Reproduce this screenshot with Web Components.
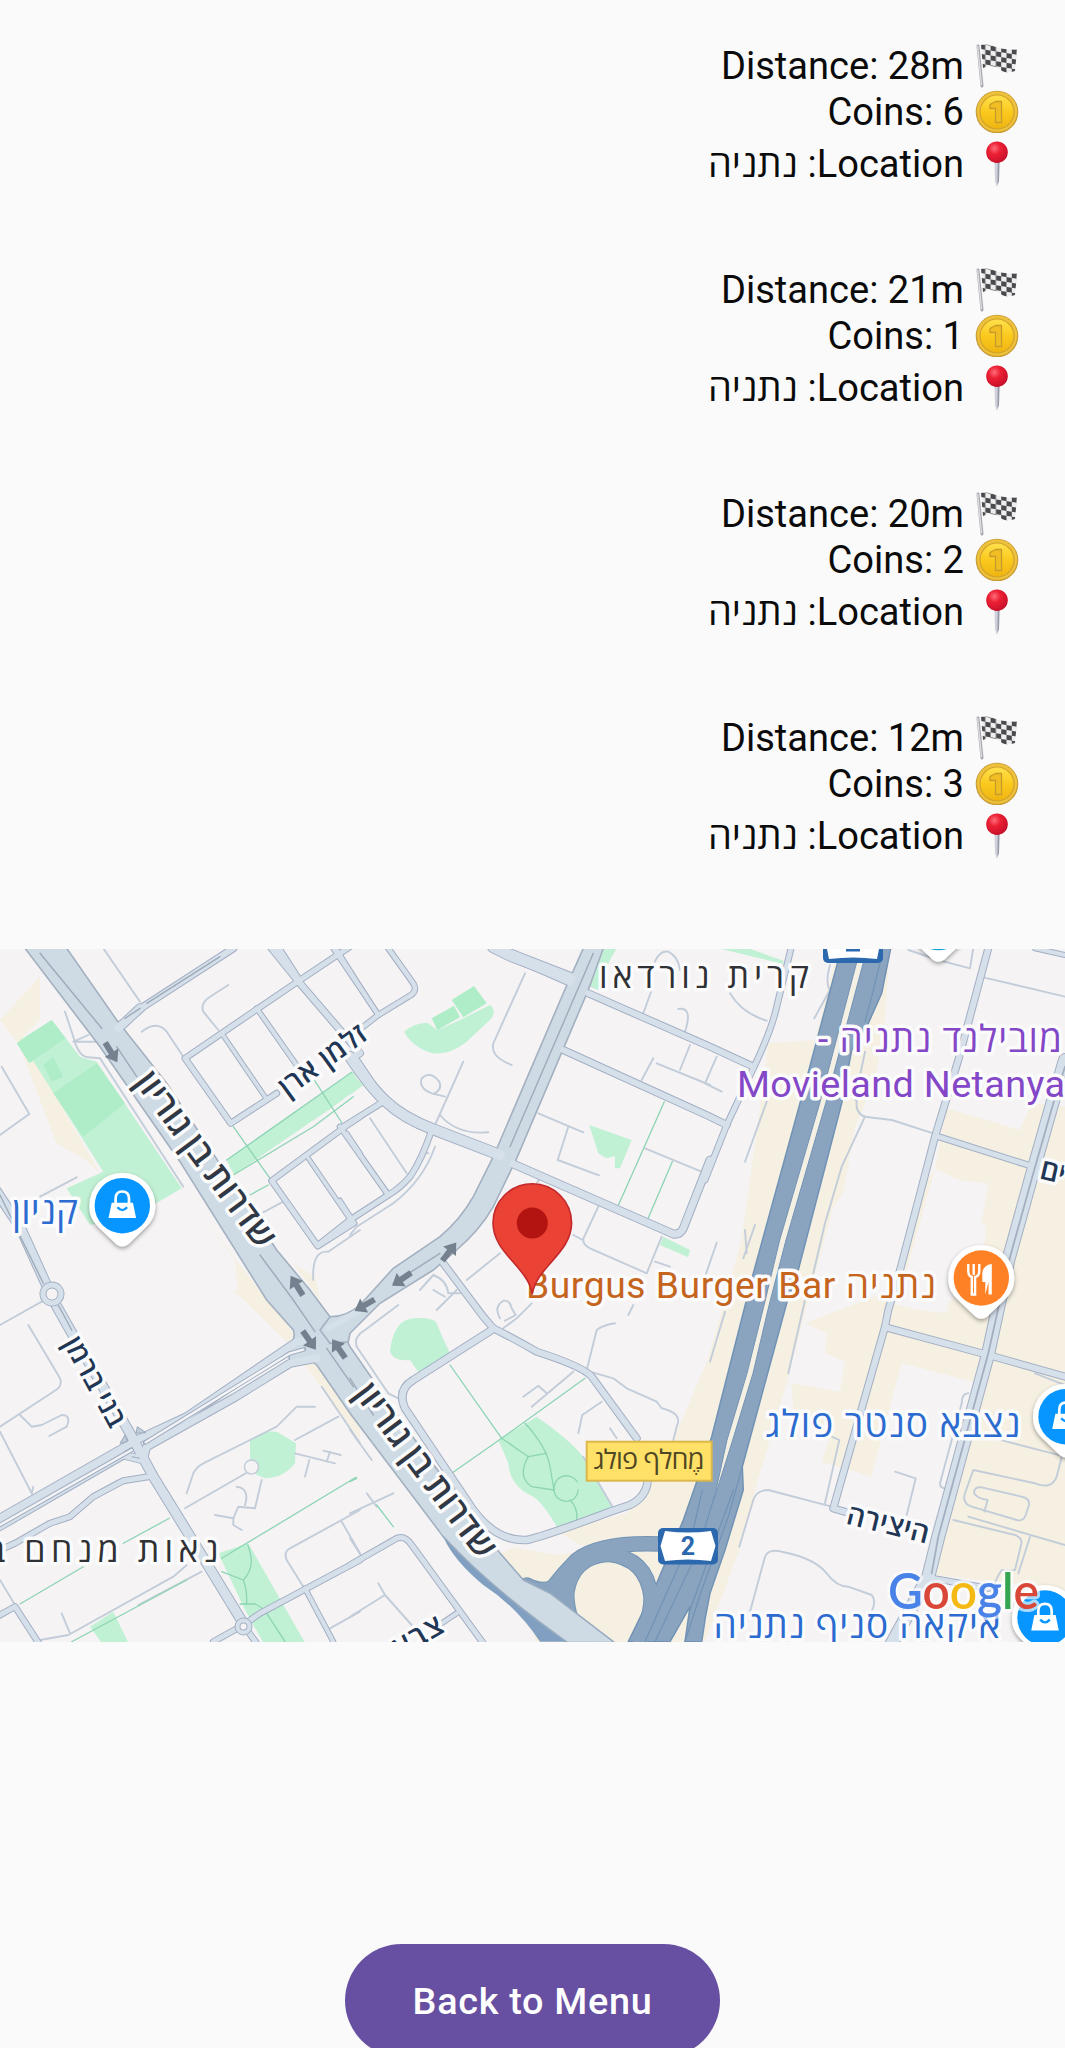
<!DOCTYPE html>
<html lang="he">
<head>
<meta charset="utf-8">
<title>Runs</title>
<style>
html,body{margin:0;height:2048px;overflow:hidden;background:#fafafa}
</style>
</head>
<body>
<score-screen></score-screen>
<script>
class EmojiIcon extends HTMLElement{
  connectedCallback(){
    const art={
      flag:`<svg viewBox="0 0 44 46" width="44" height="46"><defs><clipPath id="f"><path d="M6 2C16 0 22 6 30 6Q37 7 42 6L40 28Q30 32 23 25Q16 21 8 25Z"/></clipPath><pattern id="c" width="10.6" height="9.8" patternUnits="userSpaceOnUse" patternTransform="translate(5 1) skewY(9)"><path fill="#eee" d="M0 0h10.6v9.8H0z"/><path fill="#4a494d" d="M0 0h5.3v4.9H0zM5.3 4.9h5.3v4.9H5.3z"/></pattern></defs><g clip-path="url(#f)"><path d="M0 0h44v34H0z" fill="url(#c)"/></g><path d="M3 3L7 43" stroke="#a8a7ad" stroke-width="3" stroke-linecap="round"/><path d="M2.6 3L6.5 42" stroke="#dedde2" stroke-width="1.4"/></svg>`,
      coin:`<svg viewBox="0 0 44 44" width="44" height="44"><defs><linearGradient id="g" x2="0" y2="1"><stop stop-color="#ffe24d"/><stop offset=".5" stop-color="#fbc91d"/><stop offset="1" stop-color="#eeb412"/></linearGradient></defs><circle cx="22" cy="23" r="21.3" fill="#c99b34"/><circle cx="22" cy="22.6" r="20.2" fill="#edc13b"/><circle cx="22" cy="23" r="17" fill="url(#g)" stroke="#d3a428" stroke-width="1.2"/><path d="M15 15.500L20.5 12.500H26.5V33.500H20.5V19.500H15Z" fill="#f0be22" stroke="#c79a2c" stroke-width="1.3" stroke-linejoin="round"/></svg>`,
      pin:`<svg viewBox="0 0 44 46" width="44" height="46"><defs><radialGradient id="r" cx=".38" cy=".32" r=".7"><stop stop-color="#ff6b78"/><stop offset=".4" stop-color="#ec2035"/><stop offset="1" stop-color="#c5102a"/></radialGradient></defs><path d="M19.5 20H24.5L24 40L22 46L20 40Z" fill="#cfd0da"/><path d="M22.8 20H24.5L24 40L22.5 44Z" fill="#9698a8"/><circle cx="22" cy="11.2" r="10.8" fill="url(#r)"/></svg>`
    };
    this.attachShadow({mode:'open'}).innerHTML=`<style>:host{display:flex;width:44px;justify-content:center}svg{display:block}</style>${art[this.getAttribute('name')]}`;
  }
}
customElements.define('emoji-icon',EmojiIcon);

class ScoreItem extends HTMLElement{
  connectedCallback(){
    this.attachShadow({mode:'open'}).innerHTML=`<style>
    :host{display:flex;flex-direction:column;height:144px;direction:rtl}
    .row{display:flex;height:46px;align-items:flex-start;gap:11px}
    .row:nth-of-type(3){margin-top:6px}
    .t{line-height:46px;white-space:pre;font-size:38.1px}
    </style>
    <div class="row"><emoji-icon name="flag"></emoji-icon><span class="t">Distance: ${this.getAttribute('distance')}</span></div>
    <div class="row"><emoji-icon name="coin"></emoji-icon><span class="t">Coins: ${this.getAttribute('coins')}</span></div>
    <div class="row"><emoji-icon name="pin"></emoji-icon><span class="t">Location: <slot></slot></span></div>`;
  }
}
customElements.define('score-item',ScoreItem);

/* Shapes are written in thirds of a pixel inside six tiles; "@A".."@F" switches tile. */
const TILES={A:[0,940],B:[350,940],C:[705,940],D:[0,1290],E:[350,1290],F:[705,1290]};
function geo(s){
  let t=TILES.A;
  return s.split('@').filter(Boolean).map(part=>{
    t=TILES[part[0]];
    return part.slice(1).replace(/(-?[\d.]+)[ ,]+(-?[\d.]+)/g,(m,x,y)=>(t[0]+x/3).toFixed(1)+' '+(t[1]+y/3).toFixed(1));
  }).join(' ');
}
const BEIGE=[
 '@A M120 110 L0 240 L55 310 L170 610 L265 665 L300 700 L150 440 L60 300 L120 240Z',
 '@A M545 745 L705 960 L715 1060 L800 1080 Z','@A M880 970 L945 1010 L960 1080 Z',
 '@D M700 0 L790 0 L880 130 L870 165 Z','@D M915 225 L950 220 L1080 395 L1080 450 Z',
 '@C M390 60 L555 25 L540 240 L510 420 L450 560 L415 760 L385 800 L330 1000 @F L245 280 L150 600 L110 760 L0 1055 @E L560 1055 L450 790 L520 760 L640 720 L830 670 L900 590 L970 450 L1075 205 @C L110 900 L165 500 L190 310 L330 300Z',
 '@C M725 505 L945 570 L980 490 L1080 500 L1080 1080 @F L1080 900 L690 855 L840 190 L820 280 L590 220 L500 560 L350 515 L375 440 L265 360 L260 280 L405 305 L420 215 L360 190 L365 130 L300 100 @C L560 1050 L575 1000 L640 770 L690 685Z'
];
const WHITE=['@C M690 685 L760 720 L850 730 L830 850 L845 860 L835 930 L740 1080 L580 1080Z','@F M550 0 L740 0 L725 70 L640 60 L560 40Z','@F M590 220 L820 280 L700 700 L500 555Z','@E M450 765 L630 730 L720 780 L620 795Z'];
const GREEN=[
 '@A M60 300 L155 240 L240 350 L290 365 L545 745 L400 830 L270 855 L200 745 L310 695Z',
 '@A M680 660 L1060 395 L1080 440 L1000 500 L700 705Z','@B M0 395 L40 435 L0 465Z',
 '@B M162 275 Q190 250 232 248 L262 270 L330 240 L420 195 Q440 210 425 235 L350 305 Q300 345 250 340 Q190 325 162 275Z',
 '@B M718 555 L845 600 L810 685 L795 685 L795 648 L768 655 L745 640Z','@B M940 890 L1020 930 L1015 952 L930 915Z',
 '@B M762 25 L800 25 L780 60 L745 150 L720 140Z','@C M40 25 L130 25 L235 62 L235 72Z',
 '@D M750 450 Q790 420 830 425 L888 460 L885 520 Q850 565 795 565 L770 555 L750 510Z',
 '@D M655 790 L745 760 L915 1058 L790 1058 L735 960Z','@D M270 1010 L340 965 L385 1058 L305 1058Z',
 '@E M120 185 Q130 90 190 85 Q240 80 258 95 Q275 140 300 190 L215 260 L180 210 Q130 215 120 185Z',
 '@E M445 450 L560 380 Q660 450 700 500 L790 655 L620 710 Q580 640 550 620 Q480 590 475 520Z'
];
const GREEN2=['@A M50 310 L155 240 L197 295 L88 370Z','@A M130 375 L160 350 L190 410 L155 425Z','@A M160 460 L290 370 L375 490 L250 590Z','@B M305 180 L372 138 L410 190 L340 232Z','@B M245 235 L312 197 L330 232 L262 270Z'];
const GLINES=['@A M930 400 L1030 555','@A M700 560 L810 715','@A M680 660 L1055 397 M700 705 L940 560 L1060 470','@A M750 765 L805 735','@B M943 485 L803 800','@B M967 665 L893 838','@D M60 942 L250 830','@D M370 760 L508 685','@D M215 1055 L560 870','@D M665 805 L1068 562','@E M0 575 L20 565','@E M300 225 L455 445 L705 265','@E M305 550 L455 445','@E M80 645 L130 710','@E M240 510 L290 580','@E M455 445 L535 500 L590 490','@E M525 400 Q590 470 600 530 L612 600 L545 590 Q500 560 535 500','@E M660 630 Q685 655 680 690','@E M685 600 Q680 632 650 634 Q612 630 612 596 Q615 560 648 557 Q668 558 682 575','@D M743 765 Q770 830 730 870 L665 845','@D M730 870 Q742 900 740 942','@D M720 942 L765 942 Q785 950 800 970 L855 1055'];
const THIN=['@A M310 25 L420 185','@A M425 275 Q470 240 500 275 L550 350','@A M655 270 L610 215 Q600 190 630 170 L685 135','@A M195 215 L220 290 Q235 350 265 352 L300 355 L550 740','@A M265 285 L220 305 L300 305','@A M5 380 L88 522 L0 585','@A M120 770 L230 712','@A M775 825 L850 785','@A M940 1020 Q935 930 985 935 L1080 870',
'@B M525 100 L430 310 Q420 350 485 375','@B M340 365 L255 555','@B M285 470 L245 460 Q205 445 215 415 Q240 390 268 425 Q278 450 250 462','@B M270 525 Q320 585 415 577','@B M565 520 L700 577','@B M655 560 L623 660 L747 706','@B M875 420 L910 355','@B M920 370 L1080 435','@B M1020 315 L990 390','@B M880 220 L905 150','@B M905 95 Q920 30 955 35 Q985 50 990 90','@B M985 207 Q1030 200 1005 275','@B M885 625 L1060 697','@B M255 620 Q220 720 130 790 L20 860 L0 885','@B M235 640 L222 635','@B M60 535 L170 700','@B M560 730 L570 715','@B M450 940 L350 1020','@B M670 885 L698 900 L745 800','@B M700 900 Q700 915 720 925 L890 1000 L935 890','@B M915 965 L960 980','@B M210 1050 L250 1005 Q290 1020 295 1060 L330 1060',
'@C M75 160 Q110 220 185 242','@C M375 75 Q360 130 375 150 L328 235','@C M185 485 L120 665','@C M35 350 L0 430 L50 455','@C M455 480 Q450 520 480 530 L560 540 L685 580','@C M480 530 L410 680 L360 850 L325 1000','@C M480 335 L450 480','@C M610 30 L700 60 L795 85 L805 25','@C M835 112 L1080 170','@C M35 908 L0 1010','@C M115 955 L150 855 M125 940 L120 870',
'@D M85 105 L180 265 Q190 290 160 305 L0 410','@D M0 105 L125 35','@D M0 425 L95 610','@D M60 375 L95 410 L125 405 L185 375 Q215 375 200 410 L148 438','@D M560 610 L580 550 Q590 530 610 520 L750 450 L830 410 L890 350 L945 350','@D M885 450 L1015 380','@D M555 655 L740 548','@D M785 570 L765 655 L715 650 L700 685 L645 675','@D M710 590 Q750 595 735 645','@D M700 685 L700 705 L725 720','@D M885 490 L1005 520 M928 510 L915 560 M970 482 L1022 495 M990 485 L980 515','@D M965 290 L1080 460','@D M910 890 L860 810 Q850 785 870 775 L1080 660','@D M1025 695 L1080 790','@D M990 1015 L1080 965','@D M185 970 L210 1030','@D M120 1050 L205 1035 L520 860 L560 825','@D M415 945 L605 845','@D M0 870 L45 945','@D M100 590 L95 610',
'@E M145 325 L115 310 L20 170 Q10 140 45 120 L145 45','@E M0 420 L65 510','@E M0 670 L130 610','@E M0 745 L35 800','@E M0 980 L105 915 L85 880 M105 915 L185 1005','@E M50 610 L80 650','@E M460 115 L500 85 L545 40','@E M450 85 Q430 50 460 32 Q480 30 485 55 L497 75 L465 92','@E M260 60 L320 0 M285 20 L250 0','@E M710 240 L740 120 Q760 105 795 100','@E M835 75 L850 45','@E M720 245 L790 265 L830 295 L920 335 L935 355 Q1000 370 980 410 L970 450','@E M670 245 L545 350 M520 320 L565 287 L590 310','@E M685 430 L697 375 L755 335','@E M780 415 L800 445','@E M700 500 L790 655',
'@F M60 65 L15 215','@F M300 30 L250 250','@F M103 770 L145 630 Q155 600 190 600 L380 650','@F M380 440 L403 450 L360 640','@F M570 545 L632 565 L605 675','@F M135 965 L180 800 Q190 775 230 785 Q330 805 365 850 Q395 890 430 890 L500 915 Q515 930 500 965','@F M850 440 L1080 500 M1070 500 L1055 560 Q1040 600 990 580 L805 540 L780 610 Q770 640 800 650 L935 690 Q955 695 962 675 L972 645 Q975 625 950 620 L830 592 Q805 590 808 610 Q815 625 848 630 L838 665','@F M790 680 L1080 765','@F M745 690 L930 735 Q955 745 948 765 L930 840 L890 840 Q870 870 865 895','@F M975 740 L940 850','@F M790 310 Q770 310 770 340 L705 580 Q705 595 720 595','@F M990 250 L1080 285'];
/* [width, path] */
const STREETS=[
 [8,'@A M365 255 L430 200 L700 25'],[10,'@A M355 265 L420 205'],[8,'@A M815 25 L900 130 L1080 340 @B L12 350 L100 480'],
 [7,'@A M1080 0 L885 130 L555 355 L692 550 L830 460'],[5.5,'@A M665 280 L795 470'],[6,'@A M770 205 L900 390'],[6,'@A M1010 30 L1080 140 @B L85 225'],
 [6.5,'@B M115 25 L190 130 Q205 155 175 170 L85 225 L40 260'],[6,'@B M-50 25 L85 225'],[8,'@A M835 25 L890 110'],
 [7,'@A M1080 530 L1035 560 L815 722 L953 918 L1060 850'],[5.5,'@A M925 655 L1055 845'],[5.5,'@A M1040 580 L1080 640'],
 [7,'@B M-20 560 L100 485'],[6.5,'@B M-30 560 L115 765'],[7,'@B M245 570 Q215 660 180 710 Q150 745 115 765 L0 840 L-95 915'],[5,'@B M-30 780 L15 850'],
 [12,'@B M0 350 Q60 440 105 482 Q160 535 250 568 L450 645'],[13,'@B M430 20 L480 45 L660 115'],[7,'@B M480 50 L660 130'],
 [8,'@B M715 160 L1080 320 @C L145 380'],[8,'@B M640 330 L1080 530 @C L65 555'],[9,'@B M490 672 L970 882 Q990 885 1000 865 L1080 660'],
 [7,'@C M258 25 L215 200 Q200 270 145 385 L65 555 L0 720'],[8,'@C M850 25 L760 360 L690 590 L580 1010 @F L550 60 L540 110 L385 655 L470 680'],
 [7,'@C M700 590 L985 680'],[6,'@C M990 25 L1080 45'],[8,'@F M545 113 L850 195 L1080 260'],
 [14,'@C M1080 360 L1045 480 L985 690 L910 960 @F L850 190 L700 740 L670 860 L550 1080'],[7,'@F M680 865 L850 895'],
 [8,'@B M280 970 L400 1130 @E L430 115'],[8,'@E M430 115 Q500 150 560 185 Q700 230 725 260 L860 445'],
 [8.5,'@E M425 120 L190 270 Q140 300 165 355 L370 660 Q440 755 530 750 Q580 740 780 665 L840 645 Q890 620 893 570'],
 [7,'@E M0 825 L140 745 Q165 735 185 765 L400 1060'],[6,'@E M275 1000 L320 970'],
 [11,'@A M-20 740 L60 860 L135 1025 @D L165 40 L230 155 L390 430 L460 560 L620 820 L730 1000'],
 [9,'@D M-10 690 L340 490 L420 445 L560 380 L890 155 L940 150'],[9,'@D M-10 715 L370 495 L430 510 L440 470 L700 325 L870 220 L950 205'],
 [7,'@D M0 780 L45 760 L150 700 L210 680 L280 620 L370 572 L445 560'],
 [7,'@D M-10 980 L45 950 L115 1058'],[7,'@D M640 1055 L730 1005 L780 970 L1080 810'],[6,'@D M915 895 L1000 1055'],[7,'@D M730 1005 L770 1060'],
 [8,'@D M985 115 L1080 60']
];
const AVENUES=['@A M75 25 L300 320 L540 665 L800 1080 @D L880 120 Q890 150 860 170 L870 215 Q930 205 950 225 @E L0 370 L280 740 Q430 900 650 1055 L790 1055 L600 910 L520 870 L450 790 L180 430 L0 170 @D L1040 150 L990 80 L930 0 @A L830 930 L500 430 L350 240 L200 25 Z',
'@D M990 80 Q1040 80 1080 45 @B L130 985 L270 890 Q330 840 370 770 L430 650 L640 160 L700 25 L760 25 L715 150 L500 655 L430 800 Q390 870 320 930 L250 990 L90 1090 @E L0 130 @D L1045 155 L990 160 L960 120 Z'];
const HIGHWAYS=['@C M400 60 L285 490 L145 1000 @F L20 440 L-30 590 L-65 690 L-145 880 L-230 1055 L-105 1055 L-45 950 L-60 1055 L-10 1055 Q0 980 15 910 L60 780 L115 600 L112 530 L245 40 @C L280 990 L410 490 L440 330 L490 250 L530 160 L557 25 L410 25Z'];
const MEDIAN=['@C M457 60 L477 60 L362 490 L243 900 @F L191 50 L144 250 L83 450 L28 625 L66 450 L126 250 L176 50 @C L224 900 L344 490Z'];
const HWLINES=['@C M532 40 L500 170 L480 245','@F M112 530 L70 680 L-10 900 L-60 1055','@F M85 600 L20 780 L-45 960','@F M28 620 L10 680 L-20 780 L-150 1055','@F M-8 600 L-40 740 L-180 1055'];
const RAMP=['@E M930 762 Q750 755 680 810 Q640 850 610 890 Q580 910 530 885','@E M702 1065 Q650 990 650 910 Q665 800 775 793 Q890 805 903 920 Q905 970 870 1055','@E M620 890 L660 1040'];
const paths=(a,attr)=>a.map(d=>`<path d="${geo(d)}" ${attr}/>`).join('');

const bag='<path d="M-10.6 -3H10.6L13.8 12.4H-13.8Z" fill="#fff"/><path d="M-6.7 -2V-7Q-6.7 -14.2 0 -14.2Q6.7 -14.2 6.7 -7V-2" fill="none" stroke="#fff" stroke-width="2.7"/><path d="M-4.8 1.6Q0 7.2 4.8 1.6" fill="none" stroke="#0795ff" stroke-width="2.4"/>';
const fork='<path d="M-13 -14V-7Q-13 -2 -9.5 -1V16.5H-6.2V-1Q-2 -2 -2 -7V-14M-7.6 -14V-3" fill="none" stroke="#fff" stroke-width="2.4"/><path d="M4 16.5V4H1V-5Q2 -13 10.5 -14V16.5H7.2V4Z" fill="#fff"/>';
const poi=(x,y,c,i)=>`<g transform="translate(${x} ${y})"><path d="M-33 0A33 33 0 1 1 33 0C33 13 27 18 20 25L6 38.500Q0 43 -6 38.500L-20 25C-27 18 -33 13 -33 0Z" fill="#fff" filter="url(#sh)"/><circle r="27.7" fill="${c}"/>${i}</g>`;
const arrow=(x,y,a)=>`<path transform="translate(${x} ${y}) rotate(${a})" d="M-11 -3H1V-8L12 0L1 8V3H-11Z" fill="#75818f"/>`;
const label=(x,y,size,fill,w,s,extra='')=>`<text x="${x}" y="${y}" font-size="${size}" fill="${fill}" textLength="${w}" ${extra}>${s}</text>`;
const road=(x,y,a,size,w,s,fill='#1f3654')=>`<text transform="translate(${x} ${y}) rotate(${a})" y="${size*.31}" font-size="${size}" fill="${fill}" textLength="${w}" font-weight="600">${s}</text>`;

class CityMap extends HTMLElement{
  connectedCallback(){
    const line='fill="none" stroke-linejoin="round" stroke-linecap="round"';
    this.attachShadow({mode:'open'}).innerHTML=`<style>
    :host{display:block;height:693px}svg{display:block}
    .lb text{font-family:Roboto,"Open Sans","Liberation Sans",sans-serif;text-anchor:middle;paint-order:stroke;stroke:#fbfbfc;stroke-width:7px;stroke-linejoin:round;white-space:pre}
    </style>
    <svg width="1065" height="693" viewBox="0 949 1065 693">
    <defs><filter id="sh" x="-30%" y="-30%" width="160%" height="170%"><feDropShadow dx="0" dy="2" stdDeviation="2.2" flood-color="#000" flood-opacity=".38"/></filter></defs>
    <path d="M0 949H1065V1642H0Z" fill="#f5f3f4"/>
    ${paths(BEIGE,'fill="#f5f0e1"')}${paths(WHITE,'fill="#f5f3f4"')}${paths(GREEN,'fill="#c1f1d5"')}${paths(GREEN2,'fill="#afedc8"')}
    ${paths(THIN,line+' stroke="#c3cdd9" stroke-width="1.9"')}${paths(GLINES,line+' stroke="#8cd4b4" stroke-width="1.3"')}
    ${STREETS.map(([w,d])=>paths([d],`${line} stroke="#a3afc3" stroke-width="${w}"`)).join('')}
    ${paths(AVENUES,'fill="#cedae4" stroke="#a3b0c0" stroke-width="1.6"')}
    ${STREETS.map(([w,d])=>paths([d],`${line} stroke="#d6e0ea" stroke-width="${w-2}"`)).join('')}
    ${paths(['@C M1080 380 L1045 490 L985 700 L910 970 @F L850 190 L700 740 L680 850'],line+' stroke="#a3afc0" stroke-width="1.8"')}
    ${paths(['@A M120 40 L305 265','@A M350 320 L410 410','@A M780 945 L880 1080 @D L945 125','@D M980 175 L1060 290','@E M0 265 L70 375','@B M730 40 L480 620','@B M270 940 L130 1030','@D M175 45 L215 120','@A M0 765 L130 1030','@A M375 235 L420 205','@A M440 190 L660 50'],line+' stroke="#9eabb9" stroke-width="1.4"')}
    ${paths(['@D M435 458 L870 190 L912 178','@D M0 705 L395 480'],line+' stroke="#9fadc0" stroke-width="4.4"')}
    ${paths(['@D M437 457 L870 190 L910 179','@D M0 705 L395 480'],line+' stroke="#f4f3f5" stroke-width="2.4"')}
    ${paths(['@D M360 460 L375 435 L382 455Z','@D M408 430 L412 410 L438 428Z','@D M395 500 L420 505'],'fill="#c0ccda" stroke="#9ba9bd" stroke-width="1"')}
    <circle cx="52" cy="1294" r="9" fill="#f5f3f4" stroke="#a3b0c4" stroke-width="7"/><circle cx="52" cy="1294" r="9" fill="none" stroke="#d6e0ea" stroke-width="5"/>
    <circle cx="243.5" cy="1626.500" r="6" fill="#f5f3f4" stroke="#a3b0c4" stroke-width="6"/><circle cx="243.500" cy="1626.500" r="6" fill="none" stroke="#d6e0ea" stroke-width="4"/>
    <circle cx="251.500" cy="1467" r="7" fill="#f5f3f4" stroke="#c3cdd9" stroke-width="1.5"/>
    ${paths(RAMP,line+' stroke="#7393b5" stroke-width="15.5"')}
    ${paths(HIGHWAYS,'fill="#8aa4c0" stroke="#7192b5" stroke-width="1.5"')}
    ${paths(RAMP,line+' stroke="#8aa4c0" stroke-width="13.5"')}
    ${paths(MEDIAN,'fill="#f4f0e4" stroke="#7393b5" stroke-width="1"')}
    ${paths(HWLINES,line+' stroke="#7192b5" stroke-width="1.2"')}
    ${paths(['@E M280 740 Q420 890 650 1055 L570 1055 Q500 950 400 885 Q310 810 280 740Z'],'fill="#81a0c1"')}
    ${paths(['@E M270 725 L450 790 L520 870 L600 910 L790 1055 L650 1055 Q430 900 270 725Z'],'fill="#cedae4"')}
    ${paths(['@E M280 740 Q430 900 650 1055','@E M450 790 L520 870 L600 910 L790 1055'],line+' stroke="#9aacc0" stroke-width="1.4"')}
    ${arrow(111,1052,58)}${arrow(297,1286,-122)}${arrow(309,1340,55)}${arrow(339,1349,-125)}${arrow(449,1252,-53)}${arrow(402,1279,146)}${arrow(365,1305,150)}
    <g class="lb">
    ${label(704,988,34,'#303134',210,'קרית נורדאו')}
    ${label(940,1052,37,'#8347c7',244,'מובילנד נתניה -','direction="rtl"')}
    ${label(901,1097,37.8,'#8347c7',328,'Movieland Netanya')}
    ${label(731,1298,37.2,'#c5641c',410,'Burgus Burger Bar נתניה')}
    ${label(45,1224,37,'#2c6bd0',66,'קניון')}
    ${label(893,1437,37,'#2c6bd0',255,'נצבא סנטר פולג')}
    ${label(857,1638,37,'#2c6bd0',287,'איקאה סניף נתניה')}
    ${label(103,1562,34,'#303134',231,'נאות מנחם ב')}
    ${road(205,1160,53.5,35,210,'שדרות בן גוריון','#303845')}
    ${road(425,1471,53,35,210,'שדרות בן גוריון','#303845')}
    ${road(94,1382,61,28,99,'בני ברמן')}${road(323,1061,-36,28.5,101,'זלמן ארן')}${road(888,1525,14,28.5,84,'היצירה')}${road(418,1637,-30,29,54,'צבע')}${road(1060,1174,13,29,40,'רים')}
    </g>
    ${poi(122.300,1205.700,'#0795ff',bag)}${poi(981.300,1278,'#ff8126',fork)}${poi(1066,1416.700,'#0795ff',bag)}${poi(1045,1618,'#0795ff',bag)}${poi(938.500,921,'#18a4cf','')}
    <rect x="586.700" y="1441.700" width="125" height="39" fill="#ffe168" stroke="#dcb74a" stroke-width="2"/>
    <g font-family='"Open Sans",sans-serif' text-anchor="middle"><text x="649" y="1469" font-size="27" fill="#504724" textLength="111">מֶחלף פולג</text></g>
    <g id="shield"><rect x="658" y="1528" width="60" height="36.500" rx="5" fill="#2c68ae"/><path d="M665 1531Q688 1534 711 1531L715.500 1546L711 1561Q688 1558 665 1561L660.500 1546Z" fill="#fff"/></g>
    <text x="688" y="1555" font-family="Roboto" font-weight="700" font-size="25" fill="#2c68ae" text-anchor="middle">2</text>
    <rect x="823" y="926" width="60" height="37" rx="5" fill="#2c68ae"/><path d="M829 929H877L880 944L877 959Q853 956 829 959L826 944Z" fill="#fff"/><path d="M846 951.500H860V948.500H846Z" fill="#2c68ae"/><path d="M930 949H947Q938.500 951.500 930 949Z" fill="#18a4cf"/>
    <path d="M532.300 1294C528 1267 493 1253 493 1223A39.300 39.300 0 0 1 571.600 1223C571.600 1253 536.500 1267 532.300 1294Z" fill="#ea4335" stroke="#c3282a" stroke-width="1.600"/><circle cx="532.300" cy="1223" r="15.500" fill="#b31412"/>
    <text y="1609" font-family="Lato" font-weight="600" font-size="50" paint-order="stroke" stroke="#fff" stroke-opacity=".65" stroke-width="6" stroke-linejoin="round" textLength="151" x="888" lengthAdjust="spacingAndGlyphs" direction="ltr"><tspan fill="#4a83e8">G</tspan><tspan fill="#d94738">o</tspan><tspan fill="#f4b912">o</tspan><tspan fill="#4a83e8">g</tspan><tspan fill="#35a552">l</tspan><tspan fill="#d94738">e</tspan></text>
    </svg>`;
  }
}
customElements.define('city-map',CityMap);

class PillButton extends HTMLElement{
  connectedCallback(){
    this.attachShadow({mode:'open'}).innerHTML=`<style>:host{display:block}
    button{all:unset;box-sizing:border-box;display:flex;align-items:center;justify-content:center;width:375px;height:113px;border-radius:57px;background:#674fa1;color:#fff;font:500 37.8px Roboto,sans-serif;letter-spacing:.7px}</style><button><slot></slot></button>`;
  }
}
customElements.define('pill-button',PillButton);

class ScoreScreen extends HTMLElement{
  connectedCallback(){
    this.attachShadow({mode:'open'}).innerHTML=`<style>
    :host{display:flex;flex-direction:column;width:1065px;height:2048px;overflow:hidden;background:#fafafa;color:#0b0b0b;font-family:Roboto,"Open Sans","Liberation Sans",sans-serif}
    .list{box-sizing:border-box;height:949px;flex:none;padding:43px 46px 0 0;display:flex;flex-direction:column;gap:80px}
    city-map{flex:none}
    footer{flex:none;padding-top:302px;display:flex;justify-content:center}
    </style>
    <div class="list">
    <score-item distance="28m" coins="6">נתניה</score-item>
    <score-item distance="21m" coins="1">נתניה</score-item>
    <score-item distance="20m" coins="2">נתניה</score-item>
    <score-item distance="12m" coins="3">נתניה</score-item>
    </div>
    <city-map></city-map>
    <footer><pill-button>Back to Menu</pill-button></footer>`;
  }
}
customElements.define('score-screen',ScoreScreen);
</script>
</body>
</html>
